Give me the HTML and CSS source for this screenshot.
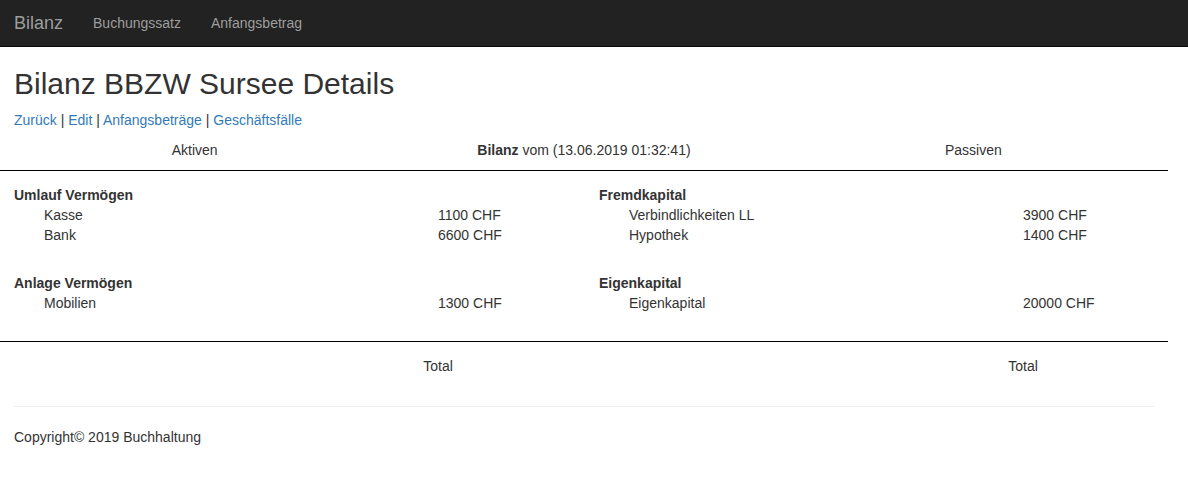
FILE: index.html
```html
<!DOCTYPE html>
<html lang="de">
<head>
<meta charset="utf-8">
<title>Bilanz BBZW Sursee Details</title>
<link rel="stylesheet" href="styles.css">
</head>
<body>
<nav class="navbar">
  <a class="brand" href="#">Bilanz</a>
  <a class="nav-link" href="#">Buchungssatz</a>
  <a class="nav-link" href="#">Anfangsbetrag</a>
</nav>
<main class="page">
  <h1 class="title">Bilanz BBZW Sursee Details</h1>
  <p class="actions"><a href="#">Zurück</a> | <a href="#">Edit</a> | <a href="#">Anfangsbeträge</a> | <a href="#">Geschäftsfälle</a></p>

  <section class="bilanz">
    <div class="bilanz-head">
      <div class="head-cell">Aktiven</div>
      <div class="head-cell"><strong>Bilanz</strong> vom (13.06.2019 01:32:41)</div>
      <div class="head-cell">Passiven</div>
    </div>

    <div class="bilanz-body">
      <div class="side">
        <div class="group">
          <div class="group-title">Umlauf Vermögen</div>
          <div class="item"><span>Kasse</span><span>1100 CHF</span></div>
          <div class="item"><span>Bank</span><span>6600 CHF</span></div>
        </div>
        <div class="group">
          <div class="group-title">Anlage Vermögen</div>
          <div class="item"><span>Mobilien</span><span>1300 CHF</span></div>
        </div>
      </div>
      <div class="side">
        <div class="group">
          <div class="group-title">Fremdkapital</div>
          <div class="item"><span>Verbindlichkeiten LL</span><span>3900 CHF</span></div>
          <div class="item"><span>Hypothek</span><span>1400 CHF</span></div>
        </div>
        <div class="group">
          <div class="group-title">Eigenkapital</div>
          <div class="item"><span>Eigenkapital</span><span>20000 CHF</span></div>
        </div>
      </div>
    </div>

    <div class="bilanz-foot">
      <div class="foot-cell"></div>
      <div class="foot-cell">Total</div>
      <div class="foot-cell"></div>
      <div class="foot-cell foot-cell-right">Total</div>
    </div>
  </section>

  <footer class="footer">
    <hr class="footer-rule">
    <p class="copyright">Copyright© 2019 Buchhaltung</p>
  </footer>
</main>
</body>
</html>
```

FILE: styles.css
```css
* { box-sizing: border-box; }

html, body {
  margin: 0;
  padding: 0;
  background: #fff;
}

body {
  font-family: "Liberation Sans", Arial, Helvetica, sans-serif;
  font-size: 14px;
  line-height: 20px;
  color: #333;
}

a {
  color: #337ab7;
  text-decoration: none;
}

/* Navbar */
.navbar {
  display: flex;
  align-items: center;
  height: 47px;
  background: #222;
  border-bottom: 1px solid #080808;
}

.navbar a { color: #9d9d9d; }

.brand {
  font-size: 18px;
  line-height: 20px;
  padding: 0 15px 0 14px;
}

.nav-link {
  padding: 0 15px;
  font-size: 14px;
}

/* Page */
.page {
  width: 1168px;
}

.title {
  margin: 17px 0 0;
  padding-left: 14px;
  font-size: 30px;
  font-weight: 500;
  line-height: 40px;
  color: #333;
}

.actions {
  margin: 6px 0 0;
  padding-left: 14px;
}

/* Bilanz table */
.bilanz-head {
  display: grid;
  grid-template-columns: repeat(3, 1fr);
  padding: 10px 0;
  border-bottom: 1px solid #000;
}

.head-cell { text-align: center; }
.head-cell strong { font-weight: 700; }

.bilanz-body {
  display: grid;
  grid-template-columns: 585px 1fr;
  padding: 14px 0 28px;
  border-bottom: 1px solid #000;
}

.side {
  display: flex;
  flex-direction: column;
  gap: 28px;
  padding-left: 14px;
}

.group-title { font-weight: 700; }

.item {
  display: grid;
  grid-template-columns: 394px 1fr;
  padding-left: 30px;
}

.bilanz-foot {
  display: grid;
  grid-template-columns: repeat(4, 1fr);
  padding: 14px 0;
}

.foot-cell { text-align: center; }
.foot-cell-right { padding-left: 2px; }

/* Footer */
.footer {
  padding: 0 14px;
}

.footer-rule {
  margin: 16px 0 20px;
  border: 0;
  border-top: 1px solid #eee;
}

.copyright {
  margin: 0;
}
```
